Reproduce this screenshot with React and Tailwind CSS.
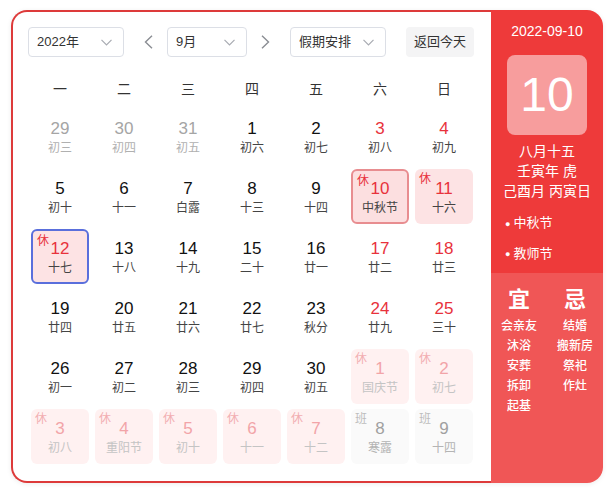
import React from "react";

const FONT = { fontFamily: '"Liberation Sans", "Noto Sans CJK SC", sans-serif' };

const weeks = ["一", "二", "三", "四", "五", "六", "日"];

// type: prev | normal | weekend | rest | selected | today | nextRest | nextWork
const days = [
  [29, "初三", "prev"], [30, "初四", "prev"], [31, "初五", "prev"], [1, "初六", "normal"], [2, "初七", "normal"], [3, "初八", "weekend"], [4, "初九", "weekend"],
  [5, "初十", "normal"], [6, "十一", "normal"], [7, "白露", "normal"], [8, "十三", "normal"], [9, "十四", "normal"], [10, "中秋节", "selected"], [11, "十六", "rest"],
  [12, "十七", "today"], [13, "十八", "normal"], [14, "十九", "normal"], [15, "二十", "normal"], [16, "廿一", "normal"], [17, "廿二", "weekend"], [18, "廿三", "weekend"],
  [19, "廿四", "normal"], [20, "廿五", "normal"], [21, "廿六", "normal"], [22, "廿七", "normal"], [23, "秋分", "normal"], [24, "廿九", "weekend"], [25, "三十", "weekend"],
  [26, "初一", "normal"], [27, "初二", "normal"], [28, "初三", "normal"], [29, "初四", "normal"], [30, "初五", "normal"], [1, "国庆节", "nextRest"], [2, "初七", "nextRest"],
  [3, "初八", "nextRest"], [4, "重阳节", "nextRest"], [5, "初十", "nextRest"], [6, "十一", "nextRest"], [7, "十二", "nextRest"], [8, "寒露", "nextWork"], [9, "十四", "nextWork"],
];

const yi = ["会亲友", "沐浴", "安葬", "拆卸", "起基"];
const ji = ["结婚", "搬新房", "祭祀", "作灶"];

const Chevron = () => (
  <svg width="11" height="7" viewBox="0 0 11 7" fill="none">
    <polyline points="0.5,0.8 5.5,5.8 10.5,0.8" stroke="#a8abb2" strokeWidth="1.2" />
  </svg>
);

const Arrow = ({ dir }) => (
  <svg width="9" height="14" viewBox="0 0 9 14" fill="none">
    <polyline
      points={dir === "left" ? "8,0.8 1.5,7 8,13.2" : "1,0.8 7.5,7 1,13.2"}
      stroke="#8a8d93"
      strokeWidth="1.4"
    />
  </svg>
);

const Select = ({ label, width }) => (
  <div
    className={`${width} h-[30px] flex items-center justify-between pl-[8px] pr-[11px] border border-[#dcdfe6] rounded-[4px] text-[13px] text-[#333] bg-white`}
  >
    <span>{label}</span>
    <Chevron />
  </div>
);

const DayCell = ({ num, lunar, type }) => {
  let box = "";
  let numCls = "text-[#111]";
  let lunarCls = "text-[#444]";
  let tag = null;

  if (type === "prev") {
    numCls = "text-[#a5a5a5]";
    lunarCls = "text-[#b0b0b0]";
  } else if (type === "weekend") {
    numCls = "text-[#e8323c]";
  } else if (type === "rest") {
    box = "bg-[#fde3e4]";
    numCls = "text-[#e8323c]";
    tag = { text: "休", cls: "text-[#e8323c]" };
  } else if (type === "selected") {
    box = "bg-[#fcdfe0] border-2 border-[#e88d90]";
    numCls = "text-[#e8323c]";
    tag = { text: "休", cls: "text-[#e8323c]" };
  } else if (type === "today") {
    box = "bg-[#fde3e4] border-2 border-[#5a6fdc]";
    numCls = "text-[#e8323c]";
    tag = { text: "休", cls: "text-[#e8323c]" };
  } else if (type === "nextRest") {
    box = "bg-[#fff1f1]";
    numCls = "text-[#f2a4a8]";
    lunarCls = "text-[#c4c4c4]";
    tag = { text: "休", cls: "text-[#f2aeb1]" };
  } else if (type === "nextWork") {
    box = "bg-[#fafafa]";
    numCls = "text-[#a0a0a0]";
    lunarCls = "text-[#b4b4b4]";
    tag = { text: "班", cls: "text-[#bdbdbd]" };
  }

  return (
    <div className={`relative h-[55px] rounded-[6px] flex flex-col items-center justify-center pt-[3px] ${box}`}>
      {tag && (
        <span className={`absolute top-[3px] left-[4px] text-[12px] leading-[14px] ${tag.cls}`}>
          {tag.text}
        </span>
      )}
      <span className={`text-[17px] leading-[20px] ${numCls}`}>{num}</span>
      <span className={`text-[12px] leading-[18px] ${lunarCls}`}>{lunar}</span>
    </div>
  );
};

export default function App() {
  return (
    <div className="w-[616px] h-[492px] bg-white pt-[10px] pl-[11px]" style={FONT}>
      <div className="flex w-[592px] h-[473px] rounded-[16px] shadow-[0_1px_5px_rgba(0,0,0,0.08)]">
        {/* calendar */}
        <div className="flex-1 border-2 border-r-0 border-[#dd3a3a] rounded-l-[16px] bg-white pt-[15px]">
          <div className="flex items-center pl-[15px]">
            <Select label="2022年" width="w-[96px]" />
            <div className="ml-[20px] flex items-center">
              <Arrow dir="left" />
            </div>
            <div className="ml-[14px]">
              <Select label="9月" width="w-[80px]" />
            </div>
            <div className="ml-[14px] flex items-center">
              <Arrow dir="right" />
            </div>
            <div className="ml-[20px]">
              <Select label="假期安排" width="w-[96px]" />
            </div>
            <div className="ml-[20px] w-[68px] h-[30px] rounded-[4px] bg-[#f4f4f5] flex items-center justify-center text-[13px] text-[#333]">
              返回今天
            </div>
          </div>

          <div className="mt-[13px] px-[18px] grid grid-cols-7 gap-x-[6px] h-[39px] items-center">
            {weeks.map((w) => (
              <div key={w} className="text-center text-[14px] text-[#333]">
                {w}
              </div>
            ))}
          </div>

          <div className="px-[18px] grid grid-cols-7 gap-x-[6px] gap-y-[5px]">
            {days.map(([num, lunar, type], i) => (
              <DayCell key={i} num={num} lunar={lunar} type={type} />
            ))}
          </div>
        </div>

        {/* side panel */}
        <div className="w-[112px] rounded-r-[16px] overflow-hidden flex flex-col text-white">
          <div className="bg-[#ee3a3a] h-[263px] flex flex-col items-center pt-[11px]">
            <div className="text-[14px] leading-[20px]">2022-09-10</div>
            <div className="mt-[14px] w-[80px] h-[80px] rounded-[8px] bg-white/50 flex items-center justify-center text-[48px] leading-none">
              10
            </div>
            <div className="mt-[6px] text-[14px] leading-[20px] text-center">
              <div>八月十五</div>
              <div>壬寅年 虎</div>
              <div>己酉月 丙寅日</div>
            </div>
            <div className="self-start pl-[14px] mt-[12px] text-[13px] leading-[20px]">
              <div>
                <span className="text-[9px] mr-[3px] align-middle">●</span>中秋节
              </div>
              <div className="mt-[10px]">
                <span className="text-[9px] mr-[3px] align-middle">●</span>教师节
              </div>
            </div>
          </div>
          <div className="flex-1 bg-[#f05656] pt-[13px] grid grid-cols-2 content-start">
            <div className="flex flex-col items-center">
              <div className="text-[22px] leading-[28px] font-bold">宜</div>
              <div className="mt-[2px] text-[12px] leading-[20px] font-medium text-center">
                {yi.map((t) => (
                  <div key={t}>{t}</div>
                ))}
              </div>
            </div>
            <div className="flex flex-col items-center">
              <div className="text-[22px] leading-[28px] font-bold">忌</div>
              <div className="mt-[2px] text-[12px] leading-[20px] font-medium text-center">
                {ji.map((t) => (
                  <div key={t}>{t}</div>
                ))}
              </div>
            </div>
          </div>
        </div>
      </div>
    </div>
  );
}
